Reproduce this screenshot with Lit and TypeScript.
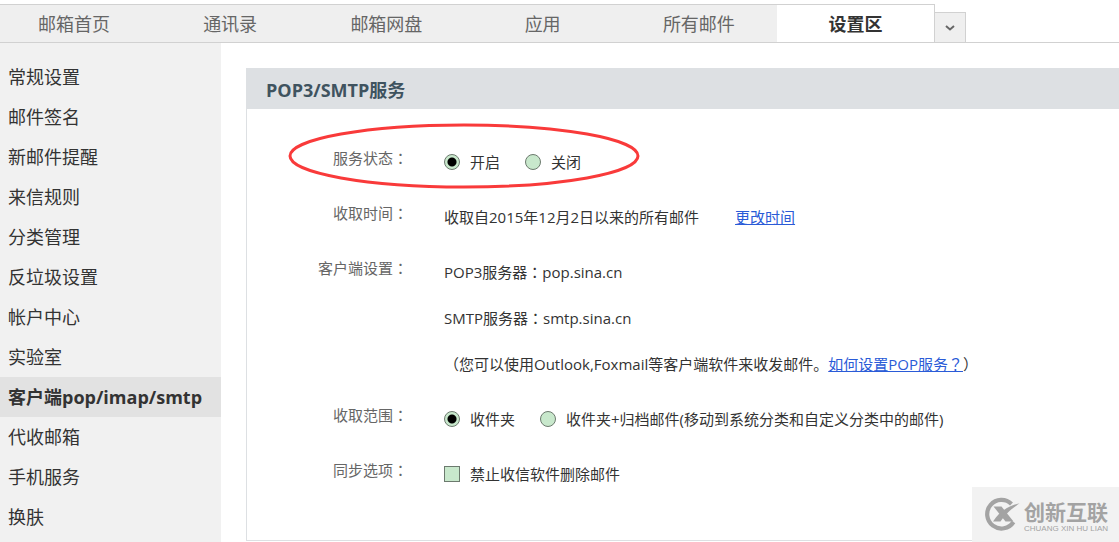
import { LitElement, html, css } from "lit";
import { customElement, state } from "lit/decorators.js";

const TABS = ["邮箱首页", "通讯录", "邮箱网盘", "应用", "所有邮件", "设置区"];
const MENU = [
  "常规设置", "邮件签名", "新邮件提醒", "来信规则", "分类管理", "反垃圾设置",
  "帐户中心", "实验室", "客户端pop/imap/smtp", "代收邮箱", "手机服务", "换肤",
];

const colon = html`<span class="mid">：</span>`;

@customElement("app-root")
export class AppRoot extends LitElement {
  @state() private tab = 5;
  @state() private item = 8;

  static styles = css`
    :host {
      display: flex;
      flex-direction: column;
      position: relative;
      box-sizing: border-box;
      min-height: 100vh;
      padding-top: 4px;
      overflow: hidden;
      background: #fff;
      color: #333;
      font: 15px/46px "Open Sans", "Noto Sans CJK SC", sans-serif;
    }
    .mid { font-family: "Noto Sans CJK TC", sans-serif; }
    a { color: inherit; text-decoration: none; }
    .tabs {
      display: flex;
      align-items: flex-end;
      border-bottom: 1px solid #d1d1d1;
      height: 38px;
    }
    .strip {
      display: flex;
      flex: 0 1 935px;
      box-sizing: border-box;
      height: 38px;
      border: solid #d1d1d1;
      border-width: 1px 1px 0 0;
      background: #efefef;
      font-size: 18px;
      line-height: 38px;
    }
    .strip a { flex: 1; text-align: center; color: #666; }
    .strip a:first-child { flex: 0 1 148px; padding-right: 4px; }
    .strip a:last-child { flex: 0 1 157px; }
    .strip a.on { background: #fff; color: #333; font-weight: bold; }
    .more {
      width: 31px;
      height: 30px;
      padding: 0;
      border: solid #d1d1d1;
      border-width: 1px 1px 0 0;
      background: #efefef;
      line-height: 0;
    }
    .main { display: flex; flex: 1; }
    .side {
      flex: none;
      width: 221px;
      padding-top: 14px;
      background: #f1f1f1;
      font-size: 18px;
      line-height: 40px;
    }
    .side a { display: block; padding-left: 8px; }
    .side a.on { background: #e2e2e2; font-weight: bold; }
    .panel {
      flex: 1;
      margin: 25px 0 1px 25px;
      border: solid #dde0e3;
      border-width: 0 0 1px 1px;
    }
    h1 {
      margin: 0;
      padding: 3px 0 0 19px;
      background: #dde0e3;
      color: #3f535f;
      font-size: 18px;
      line-height: 38px;
    }
    .rows { display: grid; gap: 9px; padding: 30px 0 43px; }
    .row {
      position: relative;
      display: grid;
      grid-template-columns: 161px 1fr;
      column-gap: 36px;
    }
    .name { color: #666; line-height: 38px; text-align: right; }
    .line { display: flex; align-items: center; white-space: nowrap; }
    .link { color: #2a5bd7; text-decoration: underline; }
    .gap { margin-left: 36px; }
    .opt { display: flex; align-items: center; margin-right: 25px; }
    input {
      appearance: none;
      flex: none;
      width: 16px;
      height: 16px;
      margin: 0 10px 0 0;
      border: 1px solid #6c7a6e;
      background: #c8e8cc;
    }
    input[type="radio"] { border-radius: 50%; }
    input[type="radio"]:checked {
      background: radial-gradient(circle, #000 4px, #c8e8cc 5px);
    }
    input[type="checkbox"]:checked { background: #4f8a58; }
    .ring {
      position: absolute;
      left: 41px;
      top: -16px;
      pointer-events: none;
    }
    .mark {
      position: absolute;
      right: 0;
      bottom: 0;
      display: flex;
      align-items: center;
      gap: 4px;
      box-sizing: border-box;
      width: 147px;
      height: 55px;
      padding-left: 11px;
      background: #f2f2f2;
      color: #a3a3a3;
      white-space: nowrap;
    }
    .brand {
      font-family: "Noto Sans CJK SC", sans-serif;
      font-size: 21px;
      font-weight: bold;
      line-height: 28px;
    }
    .latin { font: 8px/8px "Liberation Sans", sans-serif; }
  `;

  private pick(e: Event, key: "tab" | "item", i: number) {
    e.preventDefault();
    this[key] = i;
  }

  render() {
    return html`
      <nav class="tabs">
        <div class="strip">
          ${TABS.map((t, i) => html`<a href="#" class=${i === this.tab ? "on" : ""}
            @click=${(e: Event) => this.pick(e, "tab", i)}>${t}</a>`)}
        </div>
        <button class="more" aria-label="更多">
          <svg width="10" height="6" viewBox="0 0 10 6" fill="none" stroke="#666" stroke-width="2">
            <path d="M1 1L5 4.5L9 1" />
          </svg>
        </button>
      </nav>
      <div class="main">
        <nav class="side">
          ${MENU.map((t, i) => html`<a href="#" class=${i === this.item ? "on" : ""}
            @click=${(e: Event) => this.pick(e, "item", i)}>${t}</a>`)}
        </nav>
        <section class="panel">
          <h1>POP3/SMTP服务</h1>
          <form class="rows">
            <div class="row" role="radiogroup" aria-labelledby="status">
              <div class="name" id="status">服务状态${colon}</div>
              <div class="line">
                <label class="opt"><input type="radio" name="status" checked />开启</label>
                <label class="opt"><input type="radio" name="status" />关闭</label>
              </div>
              <svg class="ring" width="352" height="66" viewBox="0 0 352 66" fill="none">
                <ellipse cx="176" cy="33" rx="174" ry="31" stroke="#f93a3a" stroke-width="3" />
              </svg>
            </div>
            <div class="row">
              <div class="name">收取时间${colon}</div>
              <div class="line">收取自2015年12月2日以来的所有邮件<a class="link gap" href="#">更改时间</a></div>
            </div>
            <div class="row">
              <div class="name">客户端设置${colon}</div>
              <div>
                <div class="line">POP3服务器${colon}pop.sina.cn</div>
                <div class="line">SMTP服务器${colon}smtp.sina.cn</div>
                <div class="line">（您可以使用Outlook,Foxmail等客户端软件来收发邮件。<a class="link" href="#">如何设置POP服务<span class="mid">？</span></a>）</div>
              </div>
            </div>
            <div class="row" role="radiogroup" aria-labelledby="scope">
              <div class="name" id="scope">收取范围${colon}</div>
              <div class="line">
                <label class="opt"><input type="radio" name="scope" checked />收件夹</label>
                <label class="opt"><input type="radio" name="scope" />收件夹+归档邮件(移动到系统分类和自定义分类中的邮件)</label>
              </div>
            </div>
            <div class="row">
              <div class="name">同步选项${colon}</div>
              <div class="line">
                <label class="opt"><input type="checkbox" />禁止收信软件删除邮件</label>
              </div>
            </div>
          </form>
        </section>
      </div>
      <aside class="mark">
        <svg width="37" height="36" viewBox="0 0 37 36" fill="#a3a3a3">
          <path d="M28.500 7A14.300 14.300 0 1 0 30.500 25" fill="none" stroke="#a3a3a3" stroke-width="4.200" />
          <path d="M36.500 6.500C29 11 22.500 17 17.500 24.500H10C16 15 25 8.500 36.500 6.500Z" />
          <path d="M10.500 9.500H18.500L30.500 24.500H22.500Z" />
        </svg>
        <div>
          <div class="brand">创新互联</div>
          <div class="latin">CHUANG XIN HU LIAN</div>
        </div>
      </aside>
    `;
  }
}
